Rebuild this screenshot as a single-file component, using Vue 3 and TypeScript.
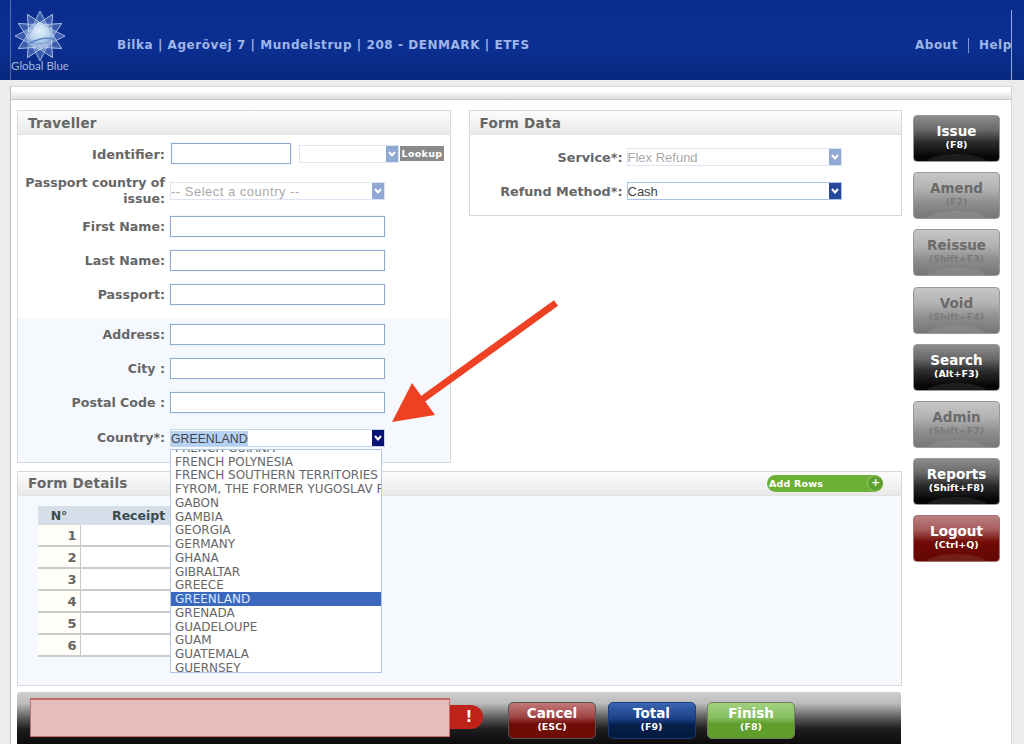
<script setup lang="ts">
interface SideButton {
  name: string
  key: string
  kind: string
}

const sideButtons: SideButton[] = [
  { name: 'Issue', key: '(F8)', kind: 'dark' },
  { name: 'Amend', key: '(F2)', kind: 'off' },
  { name: 'Reissue', key: '(Shift+F3)', kind: 'off' },
  { name: 'Void', key: '(Shift+F4)', kind: 'off' },
  { name: 'Search', key: '(Alt+F3)', kind: 'dark' },
  { name: 'Admin', key: '(Shift+F7)', kind: 'off' },
  { name: 'Reports', key: '(Shift+F8)', kind: 'dark' },
  { name: 'Logout', key: '(Ctrl+Q)', kind: 'red' },
]

const bottomButtons: SideButton[] = [
  { name: 'Cancel', key: '(ESC)', kind: 'red' },
  { name: 'Total', key: '(F9)', kind: 'blue' },
  { name: 'Finish', key: '(F8)', kind: 'green' },
]

const countries = [
  'FRENCH GUIANA', 'FRENCH POLYNESIA', 'FRENCH SOUTHERN TERRITORIES',
  'FYROM, THE FORMER YUGOSLAV REPUBLIC', 'GABON', 'GAMBIA', 'GEORGIA', 'GERMANY',
  'GHANA', 'GIBRALTAR', 'GREECE', 'GREENLAND', 'GRENADA', 'GUADELOUPE', 'GUAM',
  'GUATEMALA', 'GUERNSEY',
]

const rays = [0, 30, 60, 90, 120, 150, 180, 210, 240, 270, 300, 330]
</script>

<template>
  <div class="page">
    <header class="top">
      <div class="logo">
        <svg width="50" height="52" viewBox="-25 -26 50 52">
          <defs>
            <radialGradient id="core" cx="45%" cy="40%" r="60%">
              <stop offset="0" stop-color="#e4f0fb" />
              <stop offset="0.7" stop-color="#b8d3ec" />
              <stop offset="1" stop-color="#7fa3d6" />
            </radialGradient>
          </defs>
          <polygon
            v-for="r in rays"
            :key="r"
            points="0,-25 8,-9 -8,-9"
            fill="#7f9fd6"
            fill-opacity="0.4"
            stroke="#c2d4ee"
            stroke-width="0.8"
            :transform="`rotate(${r})`"
          />
          <circle r="14" fill="#c9dcf2" fill-opacity="0.45" />
          <path d="M-2,-14 C6,-12 12,-5 13,3 C7,9 -4,11 -12,6 C-10,-2 -6,-9 -2,-14Z" fill="url(#core)" />
          <path d="M-12,8 C-3,3 6,1 14,3" fill="none" stroke="#5f86c4" stroke-width="1.4" />
          <path d="M-9,11 C-2,7 6,6 12,7" fill="none" stroke="#8fb0de" stroke-width="1" />
        </svg>
        <span class="logo-name">Global Blue</span>
      </div>
      <div class="crumbs">Bilka | Agerövej 7 | Mundelstrup | 208 - DENMARK | ETFS</div>
      <nav class="links">
        <span>About</span>
        <i class="sep"></i>
        <span>Help</span>
      </nav>
      <i class="edge-left"></i>
      <i class="edge-right"></i>
    </header>

    <div class="shell">
      <div class="strip"></div>
      <div class="content">
        <div class="forms">
          <div class="top-row">
            <section class="panel traveller">
              <h2 class="panel-head">Traveller</h2>
              <div class="group">
                <div class="row id-row">
                  <label class="lbl">Identifier:</label>
                  <div class="txt id-input"></div>
                  <div class="sel faded id-sel">
                    <span class="sel-val"></span>
                    <span class="chev">
                      <svg width="8" height="6" viewBox="0 0 8 6"><path d="M1 1l3 3.4L7 1" fill="none" stroke="#fff" stroke-width="2" /></svg>
                    </span>
                  </div>
                  <span class="lookup">Lookup</span>
                </div>
                <div class="row issue-row">
                  <label class="lbl">Passport country of issue:</label>
                  <div class="sel faded wide">
                    <span class="sel-val spaced">-- Select a country --</span>
                    <span class="chev">
                      <svg width="8" height="6" viewBox="0 0 8 6"><path d="M1 1l3 3.4L7 1" fill="none" stroke="#fff" stroke-width="2" /></svg>
                    </span>
                  </div>
                </div>
                <div class="row"><label class="lbl">First Name:</label><div class="txt"></div></div>
                <div class="row"><label class="lbl">Last Name:</label><div class="txt"></div></div>
                <div class="row"><label class="lbl">Passport:</label><div class="txt"></div></div>
              </div>
              <div class="group tinted">
                <div class="row"><label class="lbl">Address:</label><div class="txt"></div></div>
                <div class="row"><label class="lbl">City :</label><div class="txt"></div></div>
                <div class="row"><label class="lbl">Postal Code :</label><div class="txt"></div></div>
                <div class="row country-row">
                  <label class="lbl">Country*:</label>
                  <div class="sel wide open">
                    <span class="sel-val"><mark>GREENLAND</mark></span>
                    <span class="chev">
                      <svg width="8" height="6" viewBox="0 0 8 6"><path d="M1 1l3 3.4L7 1" fill="none" stroke="#fff" stroke-width="2" /></svg>
                    </span>
                  </div>
                </div>
              </div>
            </section>

            <section class="panel form-data">
              <h2 class="panel-head">Form Data</h2>
              <div class="data-body">
                <div class="row data-row">
                  <label class="lbl">Service*:</label>
                  <div class="sel faded wide">
                    <span class="sel-val">Flex Refund</span>
                    <span class="chev">
                      <svg width="8" height="6" viewBox="0 0 8 6"><path d="M1 1l3 3.4L7 1" fill="none" stroke="#fff" stroke-width="2" /></svg>
                    </span>
                  </div>
                </div>
                <div class="row data-row">
                  <label class="lbl">Refund Method*:</label>
                  <div class="sel wide active">
                    <span class="sel-val">Cash</span>
                    <span class="chev">
                      <svg width="8" height="6" viewBox="0 0 8 6"><path d="M1 1l3 3.4L7 1" fill="none" stroke="#fff" stroke-width="2" /></svg>
                    </span>
                  </div>
                </div>
              </div>
            </section>
          </div>

          <section class="panel details">
            <div class="panel-head details-head">
              <h2>Form Details</h2>
              <span class="add-rows">Add Rows<b class="plus">+</b></span>
            </div>
            <div class="details-body">
              <table class="receipts">
                <thead>
                  <tr><th class="n">N°</th><th class="rc">Receipt Number</th></tr>
                </thead>
                <tbody>
                  <tr v-for="n in 6" :key="n"><td class="n">{{ n }}</td><td></td></tr>
                </tbody>
              </table>
            </div>
          </section>

          <div class="bottom">
            <div class="error-box"></div>
            <div class="error-tab">!</div>
            <div class="bottom-btns">
              <button v-for="b in bottomButtons" :key="b.name" class="bbtn" :class="b.kind">
                <span class="bbtn-name">{{ b.name }}</span>
                <span class="bbtn-key">{{ b.key }}</span>
              </button>
            </div>
          </div>
        </div>

        <aside class="side">
          <button v-for="b in sideButtons" :key="b.name" class="sbtn" :class="b.kind">
            <span class="sbtn-name">{{ b.name }}</span>
            <span class="sbtn-key">{{ b.key }}</span>
          </button>
        </aside>
      </div>
    </div>

    <ul class="dropdown">
      <li v-for="c in countries" :key="c" :class="{ picked: c === 'GREENLAND' }">{{ c }}</li>
    </ul>

    <svg class="arrow" width="180" height="130" viewBox="0 0 180 130">
      <path d="M166 3L30 101" fill="none" stroke="#ee4023" stroke-width="7" />
      <polygon points="2,122 22,83 45,115" fill="#ee4023" />
    </svg>
  </div>
</template>

<style>
html, body { margin: 0; background: #fff; }
</style>

<style scoped>
.page {
  position: relative;
  width: 1024px;
  height: 744px;
  overflow: hidden;
  font-family: "DejaVu Sans", sans-serif;
  background: #ececec;
}
.top {
  position: relative;
  display: flex;
  align-items: flex-start;
  height: 80px;
  background: linear-gradient(#0a2c8e, #0b2f92 60%, #08277c);
}
.edge-left {
  position: absolute;
  left: 10px;
  top: 0;
  bottom: 0;
  width: 1px;
  background: rgba(160, 170, 190, 0.5);
}
.edge-right {
  position: absolute;
  left: 1011px;
  top: 10px;
  bottom: 0;
  width: 1px;
  background: rgba(200, 215, 245, 0.75);
}
.logo {
  display: flex;
  flex-direction: column;
  align-items: center;
  width: 58px;
  margin: 10px 0 0 11px;
}
.logo-name {
  font-family: "Lato", sans-serif;
  font-size: 11.5px;
  line-height: 12px;
  color: #a3b7de;
  margin-top: -2px;
  white-space: nowrap;
}
.crumbs {
  margin: 38px 0 0 48px;
  font-size: 12px;
  font-weight: 700;
  line-height: 15px;
  letter-spacing: 0.55px;
  color: #9fb6e8;
  white-space: nowrap;
}
.links {
  display: flex;
  align-items: center;
  gap: 10px;
  margin: 38px 0 0 auto;
  width: 109px;
  font-size: 12px;
  font-weight: 700;
  line-height: 15px;
  letter-spacing: 0.5px;
  color: #9fb6e8;
  overflow: hidden;
}
.sep {
  width: 1px;
  height: 15px;
  background: #7f98d2;
  flex: none;
}
.shell {
  width: 1002px;
  height: 664px;
  margin-left: 10px;
  background: #fff;
  border-left: 1px solid #bdbdbd;
  border-right: 1px solid #d6d6d6;
  box-sizing: border-box;
}
.strip {
  height: 12px;
  margin-top: 6px;
  background: linear-gradient(#fff 30%, #dedede);
  border-top: 1px solid #d8d8d8;
  border-bottom: 1px solid #c9c9c9;
}
.content {
  display: flex;
  padding: 10px 0 0 6px;
}
.forms { width: 885px; }
.top-row {
  display: flex;
  align-items: flex-start;
  gap: 18px;
}
.panel {
  border: 1px solid #d8d8d8;
  box-sizing: border-box;
  background: #fff;
}
.panel-head, .panel-head h2 {
  margin: 0;
  font-size: 13.5px;
  font-weight: 700;
  letter-spacing: 0.25px;
  color: #666;
}
.panel-head {
  height: 24px;
  line-height: 25px;
  padding-left: 10px;
  box-sizing: border-box;
  background: linear-gradient(#fcfcfc, #e9e9e9);
  border-bottom: 1px solid #e2e2e2;
}
.traveller { width: 434px; height: 353px; }
.form-data { width: 434px; height: 106px; }
.group { padding-top: 8px; height: 183px; box-sizing: border-box; }
.tinted {
  height: 144px;
  padding-top: 6px;
  background: #f5f9fe;
}
.row {
  display: flex;
  align-items: center;
  height: 21px;
  margin-bottom: 13px;
}
.lbl {
  width: 147px;
  flex: none;
  margin-right: 5px;
  text-align: right;
  font-size: 12.6px;
  font-weight: 700;
  line-height: 16px;
  color: #666;
}
.txt {
  width: 215px;
  height: 21px;
  box-sizing: border-box;
  background: #fff;
  border: 1px solid #8eaccd;
  box-shadow: 0 0 1px #b9cde4;
}
.id-row { margin-bottom: 11px; }
.id-row .lbl { padding-top: 2px; font-size: 13px; }
.id-input { width: 120px; margin-left: 1px; }
.id-sel { width: 100px; margin-left: 8px; }
.lookup {
  width: 44px;
  height: 15px;
  margin-left: 1px;
  background: #8a8a8a;
  color: #fff;
  font-size: 9.5px;
  font-weight: 700;
  line-height: 15px;
  text-align: center;
  letter-spacing: 0.3px;
}
.issue-row { height: 31px; margin-bottom: 10px; }
.country-row { margin-top: 16px; height: 17px; }
.sel {
  display: flex;
  height: 18px;
  box-sizing: border-box;
  background: #fff;
  border: 1px solid #c5d6ec;
  font-family: "Liberation Sans", sans-serif;
  font-size: 13px;
  line-height: 17px;
  color: #444;
}
.sel.wide { width: 215px; }
.sel.active { border-color: #a9c3e2; }
.sel-val {
  flex: 1;
  min-width: 0;
  white-space: nowrap;
  overflow: hidden;
}
.sel-val.spaced { letter-spacing: 0.5px; }
.sel-val mark {
  background: #b5d1f3;
  color: #444;
  font-size: 12.3px;
  display: inline-block;
  height: 16px;
}
.chev {
  display: flex;
  align-items: center;
  justify-content: center;
  width: 12px;
  flex: none;
  background: #24499c;
}
.open .chev { background: #0a1478; }
.faded { border-color: #dbe5f3; }
.faded .sel-val { color: #aaa; }
.faded .chev { background: #8fa8d4; }
.data-body { padding-top: 13px; }
.data-row { height: 18px; margin-bottom: 16px; }
.data-row .lbl { width: 153px; margin-right: 4px; padding-top: 2px; font-size: 12.8px; }
.details {
  height: 215px;
  margin-top: 8px;
  background: #f5f9fe;
}
.details-head {
  display: flex;
  align-items: center;
  justify-content: space-between;
  padding-right: 18px;
}
.add-rows {
  display: flex;
  align-items: center;
  justify-content: space-between;
  width: 116px;
  height: 17px;
  padding: 0 0 0 2px;
  box-sizing: border-box;
  border-radius: 9px;
  background: #6cb036;
  color: #fff;
  font-size: 9.5px;
  letter-spacing: 0.2px;
}
.plus {
  width: 15px;
  height: 15px;
  border-radius: 50%;
  background: #5fa032;
  font-size: 11px;
  line-height: 14px;
  text-align: center;
  letter-spacing: 0;
  box-shadow: 0 0 2px #e4e8a8;
}
.details-body { padding: 10px 0 0 20px; }
.receipts {
  width: 338px;
  border-collapse: collapse;
  table-layout: fixed;
  font-size: 12.5px;
  color: #666;
}
.receipts th {
  height: 19px;
  padding: 0;
  background: #d6deea;
  color: #3c4c4c;
  font-weight: 700;
}
.receipts th.n { width: 42px; }
.receipts th.rc { padding-left: 32px; text-align: left; }
.receipts td {
  height: 20px;
  padding: 0;
  background: #fff;
  border-bottom: 2px solid #cbcbcb;
}
.receipts td.n {
  padding-right: 3px;
  box-sizing: border-box;
  text-align: right;
  font-size: 13px;
  font-weight: 700;
  background: #fffef8;
  border-right: 1px solid #c8c8c8;
}
.bottom {
  display: flex;
  align-items: flex-start;
  width: 884px;
  height: 52px;
  margin-top: 6px;
  padding: 6px 0 0 13px;
  box-sizing: border-box;
  border-radius: 3px 3px 0 0;
  background: linear-gradient(#cfcfcf, #bcbcbc 22%, #5a5a5a 50%, #1c1c1c 72%, #0c0c0c);
}
.error-box {
  width: 420px;
  height: 39px;
  box-sizing: border-box;
  background: #e7bcbc;
  border: 1px solid #c96a6a;
  border-top-width: 2px;
}
.error-tab {
  width: 33px;
  height: 24px;
  margin-top: 7px;
  padding-left: 5px;
  box-sizing: border-box;
  border-radius: 0 12px 12px 0;
  background: #bf2219;
  color: #fff;
  font-size: 15px;
  font-weight: 700;
  line-height: 24px;
  text-align: center;
}
.bottom-btns {
  display: flex;
  gap: 11.5px;
  margin: 4px 0 0 25px;
}
.bbtn {
  display: flex;
  flex-direction: column;
  align-items: center;
  width: 88px;
  height: 37px;
  padding: 2px 0 0;
  border: 1px solid #555;
  border-radius: 5px;
  color: #fff;
  font-family: "DejaVu Sans", sans-serif;
  font-weight: 700;
}
.bbtn-name { font-size: 13.5px; line-height: 16px; }
.bbtn-key { font-size: 9.5px; line-height: 12px; }
.bbtn.red { background: linear-gradient(#c27878, #a04444 40%, #6e0c06 60%, #6e0c06); }
.bbtn.blue { background: linear-gradient(#3a66b0, #1c4088 45%, #06204c 62%, #021a3c); border-color: #1c3c78; }
.bbtn.green { background: linear-gradient(#a3d07f, #86c060 42%, #5f9e2b 60%, #5f9e2b); border-color: #6e7e60; }
.side {
  display: flex;
  flex-direction: column;
  gap: 10.2px;
  margin: 5px 0 0 11px;
}
.sbtn {
  position: relative;
  display: flex;
  flex-direction: column;
  align-items: center;
  width: 87px;
  height: 47px;
  padding: 7px 0 0;
  border: 1px solid #999;
  border-radius: 4px;
  overflow: hidden;
  font-family: "DejaVu Sans", sans-serif;
  font-weight: 700;
}
.sbtn::after {
  content: "";
  position: absolute;
  left: 12px;
  right: 12px;
  bottom: -11px;
  height: 18px;
  border-radius: 50%;
  background: rgba(255, 255, 255, 0.09);
}
.sbtn-name { font-size: 13.5px; line-height: 16px; }
.sbtn-key { font-size: 9.5px; line-height: 12px; }
.sbtn.dark {
  color: #fff;
  background: linear-gradient(#8c8c8c, #6a6a6a 30%, #2c2c2c 58%, #060606 90%);
}
.sbtn.off {
  color: #6a6a6a;
  background: linear-gradient(#c6c6c6, #b2b2b2 35%, #8e8e8e 65%, #767676);
}
.sbtn.off .sbtn-key { color: #7a7a7a; }
.sbtn.red {
  color: #fff;
  background: linear-gradient(#b88080, #a85c5c 30%, #700a04 58%, #640804);
  border-color: #a87070;
}
.dropdown {
  position: absolute;
  left: 170px;
  top: 449px;
  width: 212px;
  height: 224px;
  margin: 0;
  padding: 0;
  box-sizing: border-box;
  list-style: none;
  overflow: hidden;
  background: #fff;
  border: 1px solid #b3c8e6;
  font-size: 12px;
  color: #666;
}
.dropdown li {
  height: 13.74px;
  line-height: 14px;
  padding-left: 4px;
  white-space: nowrap;
}
.dropdown li:first-child { margin-top: -9px; }
.dropdown .picked {
  background: #3b68bc;
  color: #dfe9fa;
}
.arrow {
  position: absolute;
  left: 390px;
  top: 300px;
}
</style>
